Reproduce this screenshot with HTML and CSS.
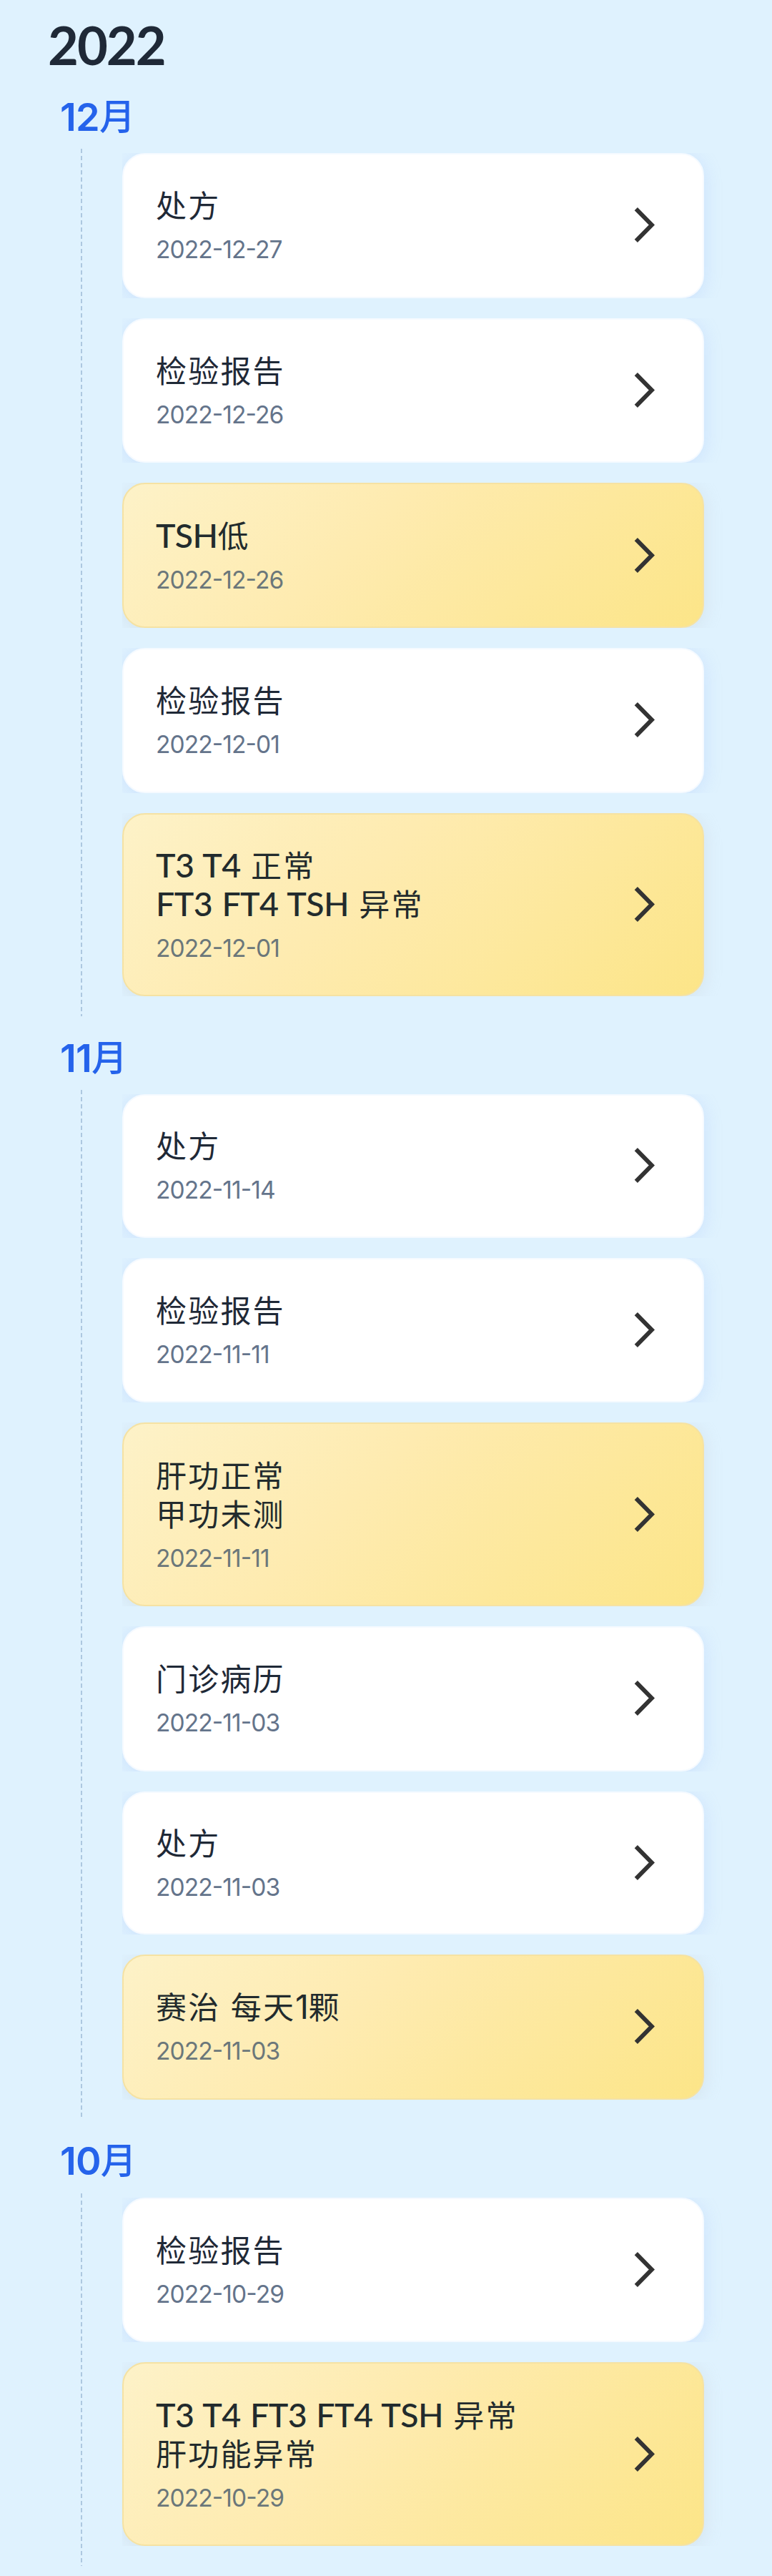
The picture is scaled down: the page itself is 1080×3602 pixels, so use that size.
FILE: index.html
```
<!DOCTYPE html>
<html lang="zh-CN">
<head>
    <meta charset="UTF-8">
    <meta name="viewport" content="width=device-width, initial-scale=1.0">
    <title>2022</title>
    <link rel="stylesheet" href="styles.css">
</head>
<body>
    <h1 class="year">2022</h1>
    <div id="timeline"></div>

    <script src="script.js"></script>
</body>
</html>
```
FILE: styles.css
```
* {
    box-sizing: border-box;
}

body {
    margin: 0;
    min-height: 3602px;
    background: #dff2fe;
    color: #1f2937;
    font-family: Inter, "Noto Sans CJK SC", sans-serif;
}

.year {
    margin: 0;
    padding: 11px 0 0 67px;
    height: 105px;
    font-family: Lato, sans-serif;
    font-size: 74px;
    line-height: 104px;
    font-weight: 700;
    letter-spacing: -2px;
}

.month-title {
    display: flex;
    align-items: center;
    margin: 0;
    padding: 13px 0 0 84px;
    height: 103px;
    font-size: 50px;
    line-height: 89px;
    font-weight: 500;
    color: #2563eb;
}

.month-title .en {
    font-size: 54px;
    font-weight: 600;
    letter-spacing: -0.8px;
}

.records {
    margin: 0 0 0 113px;
    padding: 6px 0 28px 58px;
    list-style: none;
    display: flex;
    flex-direction: column;
    gap: 28px;
    background: repeating-linear-gradient(#adc8e0 0 6px, transparent 6px 10px) left top / 2px 100% no-repeat;
}

/* the shadow only shows on the right side of a card */
.record {
    overflow: hidden;
    padding-right: 95px;
}

.card {
    display: flex;
    align-items: center;
    justify-content: space-between;
    height: 202.7px;
    padding: 0 67px 0 45px;
    border: 2px solid #f5faff;
    border-radius: 32px;
    background: #fff;
    box-shadow: 0 4px 24px rgba(147, 180, 253, 0.25);
}

.card.short {
    height: 200.4px;
}

.card.tall {
    height: 256.5px;
}

.card.note {
    border-color: #f5e2a3;
    background: linear-gradient(135deg, #fdf2c8, #feebb0 40%, #fce588);
    color: #222b2d;
    box-shadow: 0 4px 24px rgba(190, 195, 200, 0.3);
}

.info {
    padding-top: 4px;
}

.title {
    font-size: 43px;
    line-height: 54px;
    letter-spacing: 2.2px;
}

.title .en {
    font-family: Lato, sans-serif;
    font-size: 46.5px;
    font-weight: 500;
    line-height: 1;
    letter-spacing: -0.6px;
    word-spacing: 2.2px;
}

/* a lone number needs the narrow 1 */
.title .num {
    font-size: 46.5px;
    line-height: 1;
    letter-spacing: -0.6px;
}

.date {
    margin-top: 10px;
    font-size: 33.5px;
    line-height: 48px;
    letter-spacing: -0.9px;
    color: #64748b;
    font-feature-settings: "case";
}

.note .date {
    color: #6b777a;
}

.arrow {
    width: 30px;
    height: 52px;
    fill: none;
    stroke: #333;
    stroke-width: 6;
}
```
FILE: script.js
```
const months = [
    { name: '12', records: [
        ['处方', '2022-12-27'],
        ['检验报告', '2022-12-26'],
        ['TSH低', '2022-12-26', 'note'],
        ['检验报告', '2022-12-01'],
        ['T3 T4 正常\nFT3 FT4 TSH 异常', '2022-12-01', 'note tall']
    ]},
    { name: '11', records: [
        ['处方', '2022-11-14', 'short'],
        ['检验报告', '2022-11-11'],
        ['肝功正常\n甲功未测', '2022-11-11', 'note tall'],
        ['门诊病历', '2022-11-03'],
        ['处方', '2022-11-03', 'short'],
        ['赛治 每天1颗', '2022-11-03', 'note']
    ]},
    { name: '10', records: [
        ['检验报告', '2022-10-29'],
        ['T3 T4 FT3 FT4 TSH 异常\n肝功能异常', '2022-10-29', 'note tall']
    ]}
];

// Latin letters and digits get their own size
function wrapLatin(text) {
    return text.replace(/[A-Z0-9]+( [A-Z0-9]+)*/g, part => {
        const name = /[A-Z]/.test(part) ? 'en' : 'num';
        return `<span class="${name}">${part}</span>`;
    });
}

const timeline = document.querySelector('#timeline');

for (const month of months) {
    const title = document.createElement('h2');
    title.classList.add('month-title');
    title.innerHTML = `<span class="en">${month.name}</span>月`;
    timeline.appendChild(title);

    const list = document.createElement('ul');
    list.classList.add('records');
    timeline.appendChild(list);

    for (const [text, date, type = ''] of month.records) {
        const lines = text.split('\n');
        const item = document.createElement('li');
        item.classList.add('record');
        item.innerHTML = `
            <div class="card ${type}">
                <div class="info">
                    ${lines.map(line => `<div class="title">${wrapLatin(line)}</div>`).join('')}
                    <div class="date">${date}</div>
                </div>
                <svg class="arrow" viewBox="0 0 30 52"><path d="M3.8 3.1 L25.8 25.5 L3.8 47.9"/></svg>
            </div>`;
        list.appendChild(item);
    }
}
```
